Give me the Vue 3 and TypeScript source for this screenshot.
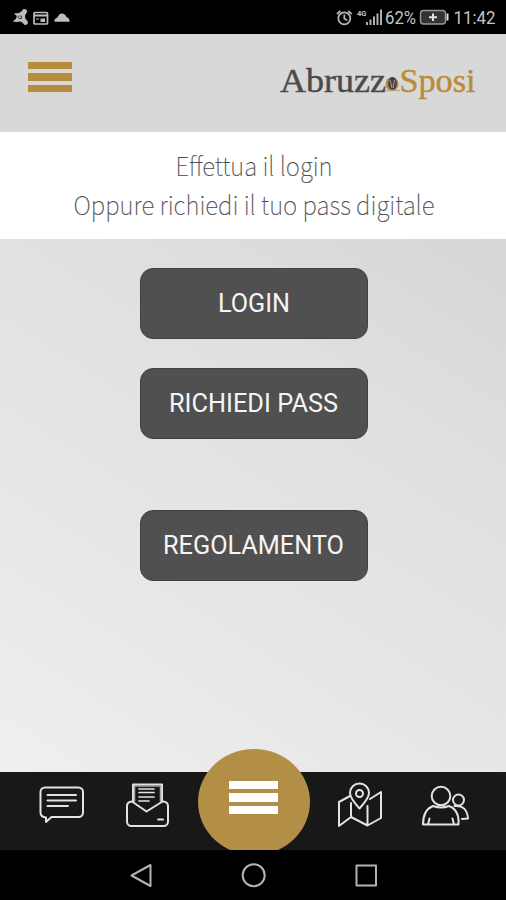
<script setup lang="ts">
interface Action {
  label: string
  spaced?: boolean
  width: number
}

const actions: Action[] = [
  { label: 'LOGIN', width: 72 },
  { label: 'RICHIEDI PASS', width: 169 },
  { label: 'REGOLAMENTO', width: 181, spaced: true },
]
</script>

<template>
  <div class="screen">
    <div class="status">
      <svg width="80" height="34" viewBox="0 0 80 34" fill="#bdbdbd">
        <path d="M14 13.500l5-.5 3-2a2.500 2.500 0 1 1 4.500 2l-1.500 2.500 .3 3 1.700 2a2.500 2.500 0 1 1-4 2.500l-2.500-1.500-4 .5-3.800-.5 3.300-2.700.7-2.600z" />
        <path d="M17.500 15.500l1.500 3h2.500v-2.500h-2" fill="none" stroke="#444" stroke-width="1" />
        <rect x="34" y="12.500" width="13.500" height="11.500" rx="1" fill="none" stroke="#bdbdbd" stroke-width="1.700" />
        <path d="M34 14.500h13.500v2H34zM40.500 18.500h4.500v3.500h-4.500zM36 18.500h3v1h-3z" />
        <path d="M54.500 21.800q-.8-2.800 3-4.300Q59 13.500 62 13.500t4.500 3.500q3.500 1.500 3 4.800z" />
      </svg>
      <svg width="176" height="34" viewBox="330 0 176 34">
        <g fill="none" stroke="#b9b9b9" stroke-width="1.700">
          <circle cx="344.300" cy="18.300" r="6" />
          <path d="M344.300 14.500v4.200l3 1.600M336.900 14l3.600-3M351.700 14l-3.600-3" />
        </g>
        <text x="357" y="16" class="signal-label" textLength="9.500" lengthAdjust="spacingAndGlyphs">4G</text>
        <path d="M366 22h2v3h-2zM369.500 19.500h2V25h-2zM373 16.500h2V25h-2zM376.500 13.500h2V25h-2zM380 9.500h2V25h-2z" fill="#b0b0b0" />
        <text x="385" y="23.500" class="status-text" textLength="31" lengthAdjust="spacingAndGlyphs">62%</text>
        <rect x="420.500" y="10.500" width="25" height="13.500" rx="3" fill="#333" stroke="#999" stroke-width="1.400" />
        <path d="M447.500 13.500v7M429 17.300h8M433 13.500v7.500" fill="none" stroke="#e0e0e0" stroke-width="2" />
        <text x="453.500" y="24" class="status-text" textLength="42" lengthAdjust="spacingAndGlyphs">11:42</text>
      </svg>
    </div>

    <header class="header">
      <div class="burger"><i /><i /><i /></div>
      <svg class="logo" width="206" height="50" viewBox="275 60 206 50">
        <text x="280" y="91.500" textLength="106" lengthAdjust="spacingAndGlyphs" fill="#4a4a4a" stroke="#4a4a4a">Abruzz</text>
        <ellipse cx="392" cy="84" rx="6.500" ry="7" fill="#b08a48" />
        <ellipse cx="392.500" cy="83.500" rx="4.300" ry="6.500" fill="#44403b" />
        <path d="M390 80l2 8M394.500 80l-1.500 8" stroke="#a4a4a0" stroke-width="1" />
        <path d="M385 90.500h15" stroke="#c3a677" stroke-width="1.300" />
        <text x="399.500" y="91.500" textLength="76" lengthAdjust="spacingAndGlyphs" fill="#b98b36" stroke="#b98b36">Sposi</text>
      </svg>
    </header>

    <div class="intro">
      <svg width="506" height="107" viewBox="0 132 506 107">
        <text x="175.500" y="176" textLength="157" lengthAdjust="spacingAndGlyphs">Effettua il login</text>
        <text x="73.500" y="215" textLength="361" lengthAdjust="spacingAndGlyphs">Oppure richiedi il tuo pass digitale</text>
      </svg>
    </div>

    <main class="content">
      <button v-for="a in actions" :key="a.label" class="action" :class="{ spaced: a.spaced }">
        <svg :width="a.width" height="32">
          <text x="0" y="25" :textLength="a.width" lengthAdjust="spacingAndGlyphs">{{ a.label }}</text>
        </svg>
      </button>
    </main>

    <nav class="tabs">
      <svg width="506" height="78" viewBox="0 772 506 78" fill="none" stroke="#e2e2e2" stroke-width="2" stroke-linejoin="round" stroke-linecap="round">
        <path d="M45 787.500H78.500a4.500 4.500 0 0 1 4.500 4.500V812.500a4.500 4.500 0 0 1-4.500 4.500H51.500L46 822V817.500q-5.500-.5-5.500-5V792a4.500 4.500 0 0 1 4.500-4.500z" />
        <path d="M47.500 795H76M47.500 800.500H76M47.500 806H68" />
        <path d="M133 802V784.500H162V802M132 801.500q-5 .5-5 4.500V821.500a4.500 4.500 0 0 0 4.500 4.500H163.500a4.500 4.500 0 0 0 4.500-4.500V806q0-4-5-4.500M132 801.500L146.500 811.500L162.500 801.500M158 819.500h5" />
        <path d="M134.500 801V786H160.500V801" stroke="#a8a8a8" stroke-width="1.500" />
        <path d="M139 789h15M139 792.500h15M139 797h15M139 801h10" stroke-width="1.700" />
        <path d="M350 796L339 802V826L351 817L367.500 825.500L381 818V792L370 799M351 803V817M367.500 806V825.500" />
        <path d="M359.500 808.500Q350 798 350 793a9.500 9.500 0 0 1 19 0Q369 798 359.500 808.500z" />
        <circle cx="359.500" cy="793.500" r="3.500" />
        <circle cx="441" cy="796" r="9.300" />
        <path d="M433 806Q423 810 423 824.500H458.500Q459.500 810 449 806M429.500 818.500l-1.500 6M452.500 818.500l1.500 6M433 806q8 3 16 0" />
        <circle cx="458.500" cy="800" r="5.500" />
        <path d="M454.500 806Q467 805 468 818.500l-6 .5" />
      </svg>
      <div class="fab"><i /><i /><i /></div>
    </nav>

    <div class="system">
      <svg width="506" height="50" viewBox="0 850 506 50" fill="none" stroke="#b3b3b3" stroke-width="2" stroke-linejoin="round">
        <path d="M131.500 875.500L150.500 865V886z" />
        <circle cx="253.700" cy="875.300" r="11" />
        <rect x="356.500" y="865.500" width="19.500" height="20" />
      </svg>
    </div>
  </div>
</template>

<style>
body {
  margin: 0;
}
</style>

<style scoped>
.screen {
  width: 506px;
  height: 900px;
  display: flex;
  flex-direction: column;
  overflow: hidden;
  font-family: Roboto, sans-serif;
}

svg {
  display: block;
}

.status {
  height: 34px;
  flex: none;
  background: #000;
  display: flex;
  justify-content: space-between;
}

.status-text {
  font-size: 17.500px;
  fill: #c4c4c4;
}

.signal-label {
  font-size: 8px;
  font-weight: 700;
  fill: #c4c4c4;
}

.header {
  height: 98px;
  flex: none;
  box-sizing: border-box;
  background: #d8d8d8;
  display: flex;
  justify-content: space-between;
  align-items: flex-start;
  padding: 26px 25px 0 28px;
}

.burger {
  display: flex;
  flex-direction: column;
  gap: 4px;
  padding-top: 1.500px;
}

.burger i {
  width: 44px;
  height: 7.500px;
  background: #b68d3d;
}

.logo text {
  font-family: "Liberation Serif", serif;
  font-size: 33px;
  stroke-width: 0.400px;
}

.intro {
  height: 107px;
  flex: none;
  background: #fff;
}

.intro text {
  font-family: "Noto Sans CJK SC", sans-serif;
  font-weight: 100;
  font-size: 26.500px;
  fill: #505050;
  stroke: #505050;
  stroke-width: 0.200px;
}

.content {
  flex: 1;
  background: linear-gradient(32deg, #efefef 0%, #e6e6e6 38%, #dfdfde 72%, #d6d6d5 100%);
  display: flex;
  flex-direction: column;
  align-items: center;
  gap: 29px;
  padding: 28.500px 0 0 1px;
}

.action {
  width: 228px;
  height: 71px;
  box-sizing: border-box;
  padding: 0;
  border: 1px solid #414141;
  border-radius: 13px;
  background: #505050;
  display: flex;
  align-items: center;
  justify-content: center;
}

.action.spaced {
  margin-top: 42px;
}

.action text {
  font-family: Roboto, sans-serif;
  font-size: 25px;
  fill: #f5f5f5;
}

.tabs {
  position: relative;
  height: 78px;
  flex: none;
  background: #181818;
}

.fab {
  position: absolute;
  left: 197.500px;
  top: -23px;
  width: 112px;
  height: 106px;
  box-sizing: border-box;
  border-radius: 50%;
  background: #b28e46;
  display: flex;
  flex-direction: column;
  align-items: center;
  gap: 4px;
  padding-top: 32px;
}

.fab i {
  width: 49px;
  height: 8.300px;
  background: #fff;
}

.system {
  position: relative;
  height: 50px;
  flex: none;
  background: #000;
}
</style>
